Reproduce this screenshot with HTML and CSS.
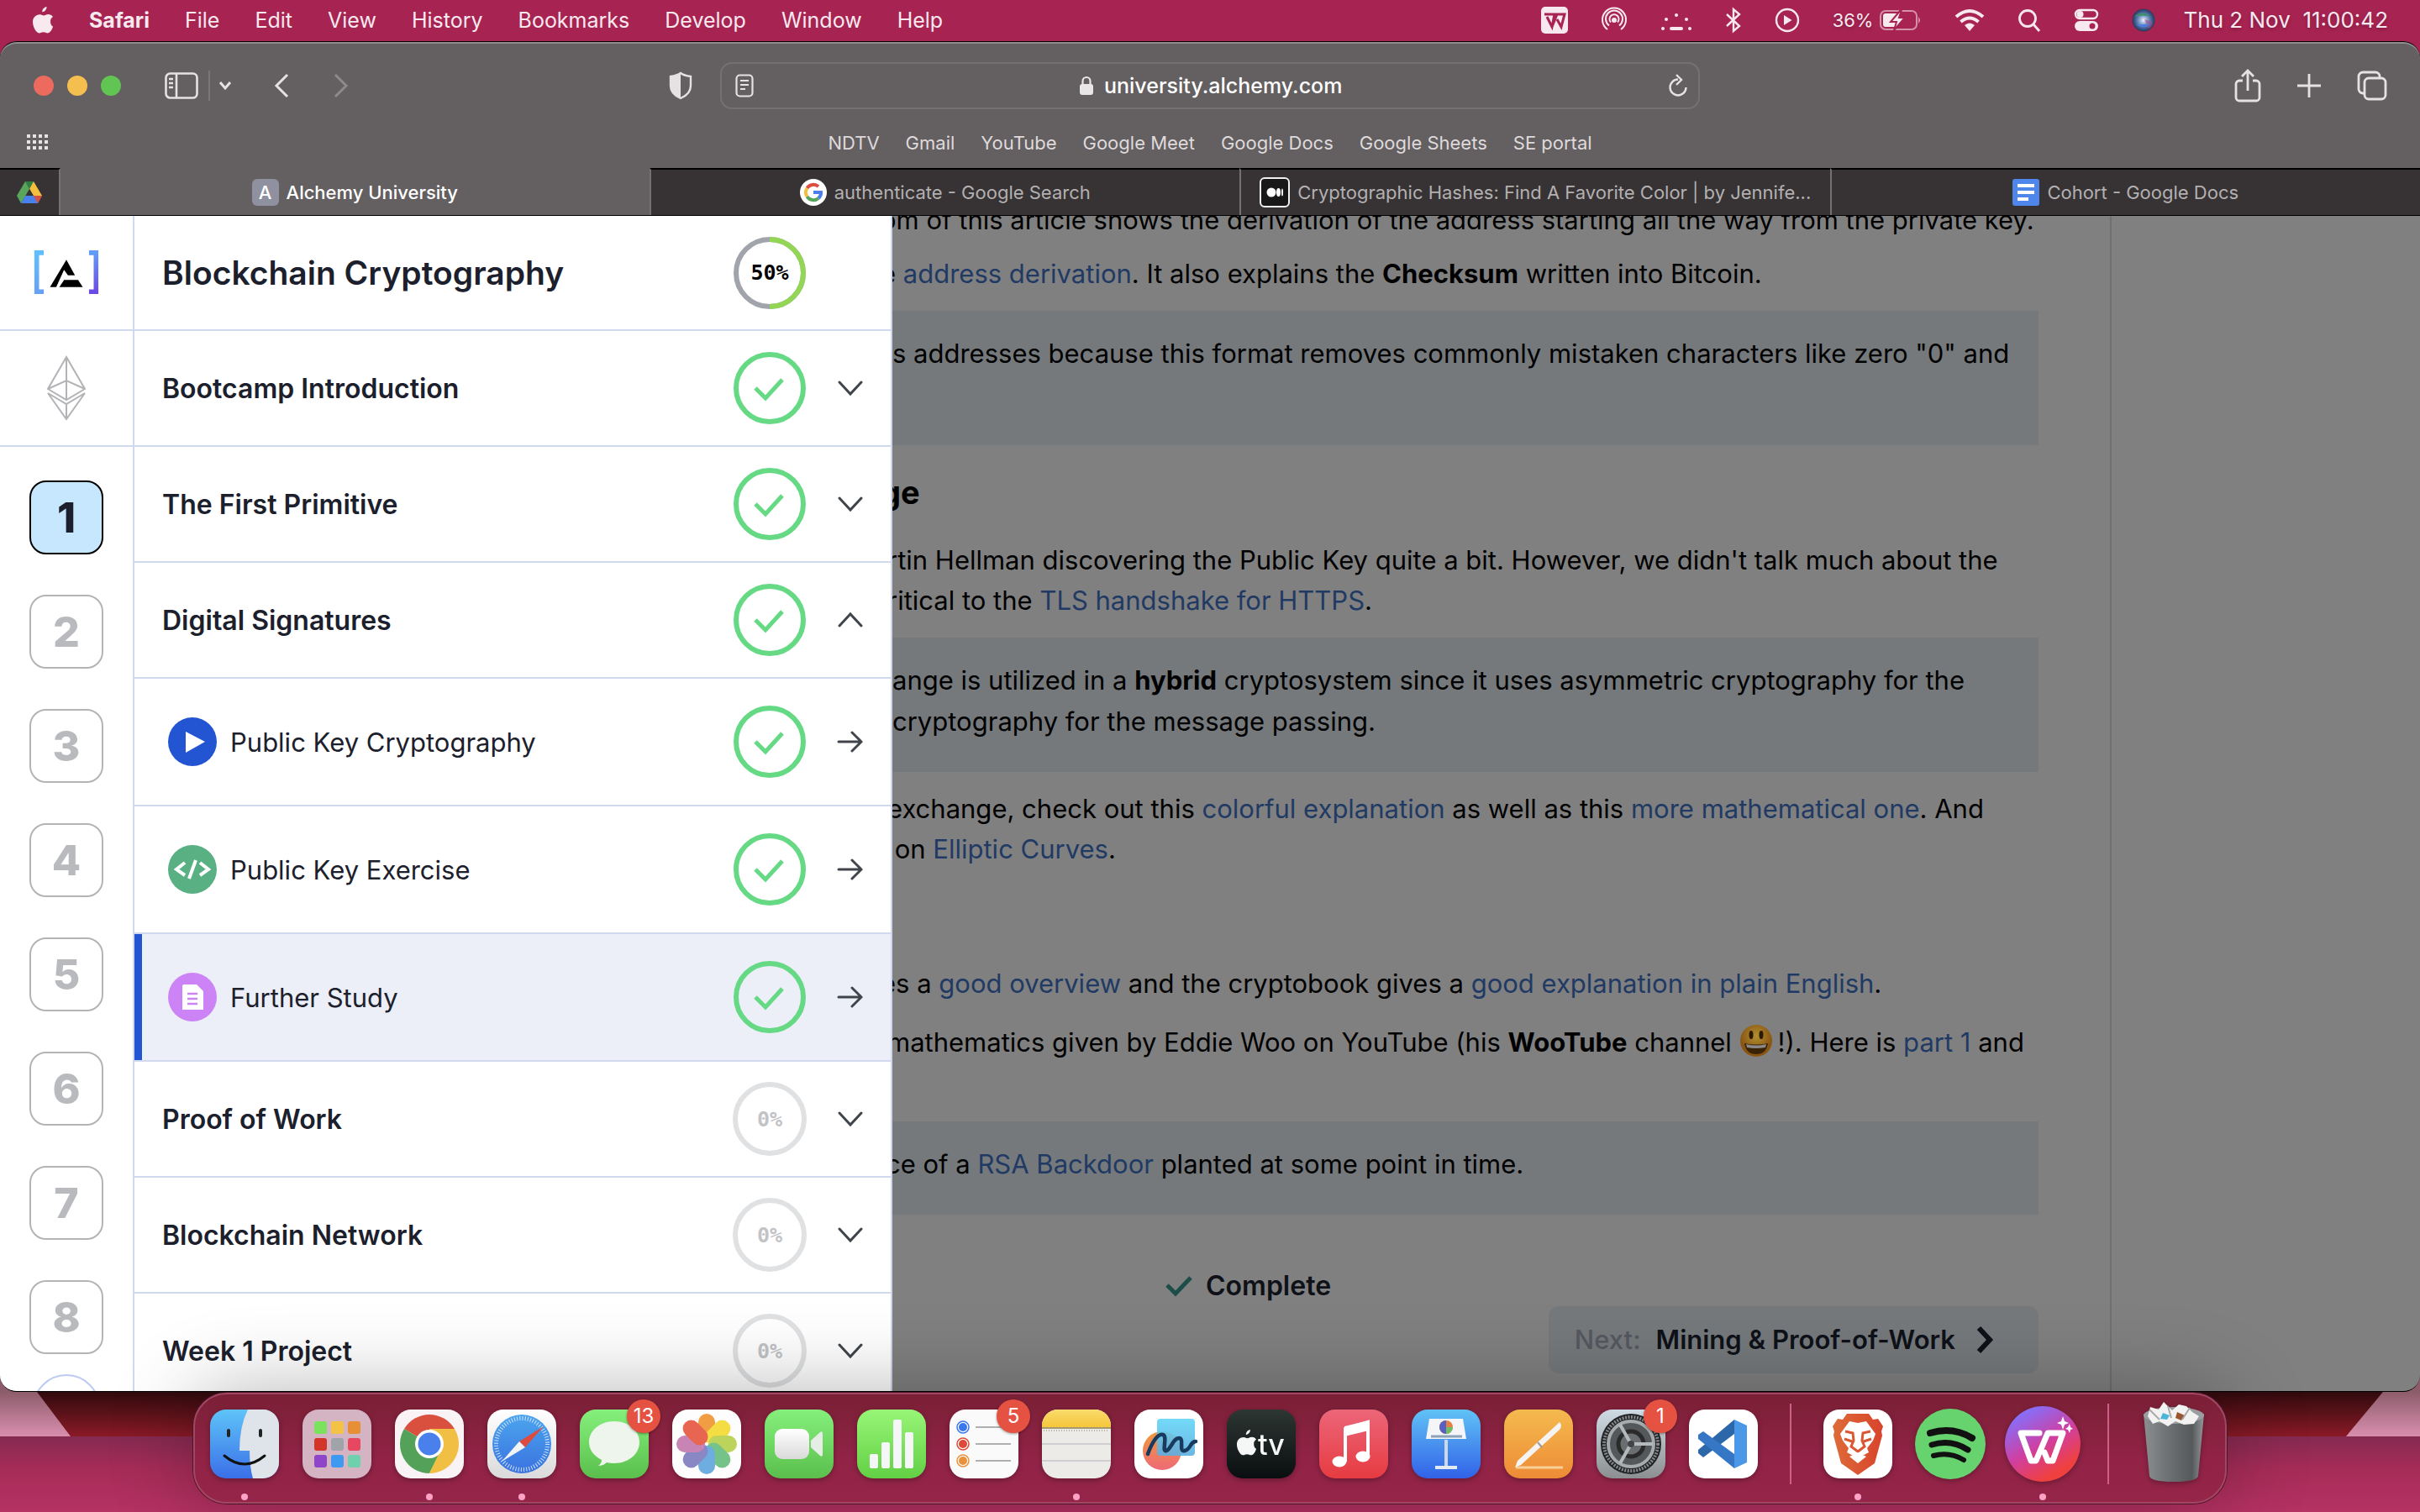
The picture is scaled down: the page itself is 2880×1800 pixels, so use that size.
FILE: index.html
```html
<!DOCTYPE html>
<html lang="en">
<head>
<meta charset="utf-8">
<title>Alchemy University</title>
<link rel="stylesheet" href="styles.css">
</head>
<body>
<svg class="defs" aria-hidden="true">
  <defs>
    <linearGradient id="gFinder" x2="0" y2="1"><stop offset="0" stop-color="#5ec4f8"/><stop offset="1" stop-color="#3a6fe8"/></linearGradient>
    <linearGradient id="gGreen" x2="0" y2="1"><stop offset="0" stop-color="#86f07c"/><stop offset="1" stop-color="#5abf4c"/></linearGradient>
    <linearGradient id="gLime" x2="0" y2="1"><stop offset="0" stop-color="#98f577"/><stop offset="1" stop-color="#62d044"/></linearGradient>
    <linearGradient id="gWhite" x2="0" y2="1"><stop offset="0" stop-color="#fff"/><stop offset="1" stop-color="#d9dad9"/></linearGradient>
    <linearGradient id="gSafari" x2="0" y2="1"><stop offset="0" stop-color="#4ba5ee"/><stop offset="1" stop-color="#3a72e0"/></linearGradient>
    <linearGradient id="gYellow" x2="0" y2="1"><stop offset="0" stop-color="#fadb6b"/><stop offset="1" stop-color="#f4c53a"/></linearGradient>
    <linearGradient id="gTv" x2="0" y2="1"><stop offset="0" stop-color="#2d3633"/><stop offset="1" stop-color="#0a0e10"/></linearGradient>
    <linearGradient id="gMusic" x2="0" y2="1"><stop offset="0" stop-color="#ec6679"/><stop offset="1" stop-color="#e63b41"/></linearGradient>
    <linearGradient id="gKey" x2="0" y2="1"><stop offset="0" stop-color="#60c2f6"/><stop offset="1" stop-color="#3162e8"/></linearGradient>
    <linearGradient id="gPages" x2="0" y2="1"><stop offset="0" stop-color="#f4ba4e"/><stop offset="1" stop-color="#ee8b36"/></linearGradient>
    <linearGradient id="gSet" x2="0" y2="1"><stop offset="0" stop-color="#cfdce5"/><stop offset="1" stop-color="#8c8f90"/></linearGradient>
    <linearGradient id="gBrave"><stop offset="0" stop-color="#de6b38"/><stop offset="1" stop-color="#d8442c"/></linearGradient>
    <linearGradient id="gWps" x1=".2" x2=".8" y2="1"><stop offset=".1" stop-color="#8a6cf5"/><stop offset=".5" stop-color="#d03fa0"/><stop offset=".85" stop-color="#ef4040"/></linearGradient>
    <linearGradient id="gTrash"><stop offset="0" stop-color="#8c8f90"/><stop offset=".4" stop-color="#6d7173"/><stop offset=".8" stop-color="#56595b"/><stop offset="1" stop-color="#94989a"/></linearGradient>
    <linearGradient id="gFree" x2="0" y2="1"><stop offset="0" stop-color="#f09a3c"/><stop offset="1" stop-color="#ee6a78"/></linearGradient>
    <linearGradient id="gFree2" x2="0" y2="1"><stop offset="0" stop-color="#63d6f8"/><stop offset="1" stop-color="#5caee0"/></linearGradient>
    <linearGradient id="gLeft" gradientUnits="userSpaceOnUse" x1="0" y1="2" x2="0" y2="54"><stop offset="0" stop-color="#5fc0ff"/><stop offset="1" stop-color="#66a0f8"/></linearGradient>
    <linearGradient id="gRight" gradientUnits="userSpaceOnUse" x1="0" y1="2" x2="0" y2="54"><stop offset="0" stop-color="#639cf8"/><stop offset="1" stop-color="#6a4ae6"/></linearGradient>
    <radialGradient id="gSiri"><stop offset="0" stop-color="#f4f2ff"/><stop offset=".35" stop-color="#8aa6cf"/><stop offset=".75" stop-color="#3d5a92"/><stop offset="1" stop-color="#2b3a55"/></radialGradient>
    <radialGradient id="gSmile" cy=".35"><stop offset="0" stop-color="#b09030"/><stop offset="1" stop-color="#8a5512"/></radialGradient>
    <symbol id="apple" viewBox="0 0 26 32"><path d="M17.500 0c.3 3-2.300 6.200-5.200 6.200C12 3.400 14.500.4 17.500 0zM22 17.200c0-3 2-4.600 3-5.200-1.500-2.200-3.800-2.900-5.300-2.900-2.500-.1-4.400 1.400-5.500 1.400s-2.900-1.400-4.800-1.300C5 9.300.8 12.400 1 18.500 1.200 24 5 31.200 8.600 31.400c1.900 0 2.800-1.200 5.100-1.200s3 1.200 5 1.200c3.400-.1 5.600-5 6.300-7.800-1.800-.8-3-3.200-3-6.400z" fill="currentColor"/></symbol>
    <symbol id="down" viewBox="0 0 32 32"><path d="M3 9l13 14L29 9" fill="none" stroke="#40444b" stroke-width="3" stroke-linecap="round"/></symbol>
    <symbol id="up" viewBox="0 0 32 32"><path d="M3 23L16 9l13 14" fill="none" stroke="#40444b" stroke-width="3" stroke-linecap="round"/></symbol>
    <symbol id="arrow" viewBox="0 0 32 32"><path d="M2 16h27M18 5l11 11-11 11" fill="none" stroke="#40444b" stroke-width="3" stroke-linecap="round"/></symbol>
    <symbol id="done" viewBox="0 0 88 88"><circle cx="44" cy="44" r="40" fill="none" stroke="#66d985" stroke-width="6"/><path d="M27 44l12 12 20-22" fill="none" stroke="#66d985" stroke-width="5"/></symbol>
  </defs>
</svg>

<header class="menubar">
  <nav class="menus" aria-label="Menu bar">
    <button aria-label="Apple menu"><svg width="26" height="32"><use href="#apple"/></svg></button>
    <button class="strong">Safari</button><button>File</button><button>Edit</button><button>View</button><button>History</button><button>Bookmarks</button><button>Develop</button><button>Window</button><button>Help</button>
  </nav>
  <div class="status">
    <svg width="32" height="32" viewBox="0 0 32 32"><rect width="32" height="32" rx="5" fill="#f6e8ee"/><path d="M4 9h12l-3 15-6-12M13 24l6-15h9l-4 15-5-9" fill="none" stroke="#a72352" stroke-width="3"/></svg>
    <svg width="32" height="32" viewBox="0 0 32 32" fill="none" stroke="currentColor" stroke-width="2"><path d="M8 27a14 14 0 1 1 16 0M10 22.500a10 10 0 1 1 12 0M12 18.500a5.500 5.500 0 1 1 8 0"/><circle cx="16" cy="16" r="2" fill="currentColor"/></svg>
    <svg width="38" height="32" viewBox="0 0 38 32" fill="currentColor"><circle cx="19" cy="10" r="2"/><circle cx="7" cy="15" r="2"/><circle cx="31" cy="15" r="2"/><circle cx="3" cy="26" r="2"/><circle cx="35" cy="26" r="2"/><rect x="11" y="24" width="16" height="4" rx="2"/></svg>
    <svg width="20" height="32" viewBox="0 0 20 32" fill="none" stroke="currentColor" stroke-width="2.400"><path d="M2 9l15 14-7 6V3l7 6L2 23"/></svg>
    <svg width="30" height="32" viewBox="0 0 30 32"><circle cx="15" cy="16" r="13" fill="none" stroke="currentColor" stroke-width="2.400"/><path d="M11 10l9.500 6L11 22z" fill="currentColor"/></svg>
    <div class="battery"><span>36%</span><svg width="50" height="32" viewBox="0 0 50 32"><rect x="1" y="5" width="43" height="22" rx="6" fill="none" stroke="#d391aa" stroke-width="2"/><path d="M46 12q4 4 0 8z" fill="#d391aa"/><rect x="4" y="8" width="18" height="16" rx="3" fill="currentColor"/><path d="M25 4L13 18h7l-3 10 13-15h-7l3-9z" fill="currentColor" stroke="#a72352" stroke-width="2"/></svg></div>
    <svg width="36" height="32" viewBox="0 0 36 32" fill="none" stroke="currentColor" stroke-width="4"><path d="M2 12q16-14 32 0M7.500 18q10.500-9 21 0"/><path d="M12 22q6-5 12 0l-6 7z" fill="currentColor" stroke="none"/></svg>
    <svg width="28" height="32" viewBox="0 0 28 32" fill="none" stroke="currentColor" stroke-width="2.800"><circle cx="12" cy="14" r="9.500"/><path d="M19 21l7 8"/></svg>
    <svg width="30" height="32" viewBox="0 0 30 32"><rect x="2" y="4" width="26" height="10" rx="5" fill="none" stroke="currentColor" stroke-width="2.400"/><circle cx="7.500" cy="9" r="4" fill="currentColor"/><rect x="1" y="17" width="28" height="12" rx="6" fill="currentColor"/><circle cx="22" cy="23" r="3.500" fill="#a72352"/></svg>
    <svg width="28" height="32" viewBox="0 0 28 32"><circle cx="14" cy="16" r="13.500" fill="url(#gSiri)"/><path d="M3 12q8-9 20 0-9-3-20 0z" fill="#3b8f6e"/><path d="M15 15l10 3q-1 6-5 8z" fill="#a0508c" opacity=".6"/><path d="M5 21q9 7 18-1-8 2-18 1z" fill="#4a7fe0"/></svg>
    <time>Thu 2 Nov&nbsp; 11:00:42</time>
  </div>
</header>

<main class="window">
  <header class="toolbar">
    <div class="tools-left">
      <span class="lights"><i class="red"></i><i class="amber"></i><i class="green"></i></span>
      <button class="side" aria-label="Sidebar"><svg width="40" height="32" viewBox="0 0 40 32" fill="none" stroke="currentColor" stroke-width="2.600"><rect x="1.500" y="1.500" width="37" height="29" rx="5"/><path d="M14 2v28M5 8h5M5 13h5M5 18h5" /></svg></button>
      <span class="rule"></span>
      <button class="caret" aria-label="Tab groups"><svg width="16" height="12" viewBox="0 0 16 12" fill="none" stroke="currentColor" stroke-width="3"><path d="M2 2l6 7 6-7"/></svg></button>
      <button class="back" aria-label="Back"><svg width="18" height="30" viewBox="0 0 18 30" fill="none" stroke="currentColor" stroke-width="3"><path d="M16 2L3 15l13 13"/></svg></button>
      <button class="fwd" aria-label="Forward"><svg width="18" height="30" viewBox="0 0 18 30" fill="none" stroke="#8e898b" stroke-width="3"><path d="M2 2l13 13L2 28"/></svg></button>
      <button class="shield" aria-label="Privacy report"><svg width="30" height="34" viewBox="0 0 30 34"><path d="M15 2c4 3 8 3.500 12 4v11c0 7-5 12-12 15C8 29 3 24 3 17V6c4-.5 8-1 12-4z" fill="none" stroke="currentColor" stroke-width="2.400"/><path d="M15 2v30C8 29 3 24 3 17V6c4-.5 8-1 12-4z" fill="currentColor"/></svg></button>
    </div>
    <div class="address">
      <button aria-label="Reader"><svg width="22" height="28" viewBox="0 0 22 28" fill="none" stroke="currentColor" stroke-width="2.200"><rect x="1.500" y="1.500" width="19" height="25" rx="4"/><path d="M6 8h10M6 13h10M6 18h6"/></svg></button>
      <label class="url"><svg width="18" height="24" viewBox="0 0 18 24"><rect x="1" y="10" width="16" height="13" rx="3" fill="currentColor"/><path d="M4.500 11V6.500a4.500 4.500 0 0 1 9 0V11" fill="none" stroke="currentColor" stroke-width="2.200"/></svg><input type="text" aria-label="Address" value="university.alchemy.com"></label>
      <button aria-label="Reload"><svg width="24" height="28" viewBox="0 0 24 28" fill="none" stroke="currentColor" stroke-width="2.400"><path d="M12 6.500a9.500 9.500 0 1 0 9.500 9.500M10 1l6 6-6 6"/></svg></button>
    </div>
    <div class="tools-right">
      <button aria-label="Share"><svg width="32" height="40" viewBox="0 0 32 40" fill="none" stroke="currentColor" stroke-width="2.800"><path d="M10 14H6a4 4 0 0 0-4 4v16a4 4 0 0 0 4 4h20a4 4 0 0 0 4-4V18a4 4 0 0 0-4-4h-4M16 26V3M9 9l7-7 7 7"/></svg></button>
      <button aria-label="New tab"><svg width="28" height="28" viewBox="0 0 28 28" stroke="currentColor" stroke-width="2.800"><path d="M14 0v28M0 14h28"/></svg></button>
      <button aria-label="Tab overview"><svg width="36" height="36" viewBox="0 0 36 36" fill="none" stroke="currentColor" stroke-width="2.800"><rect x="9" y="9" width="25" height="25" rx="5"/><path d="M9 27H7a5 5 0 0 1-5-5V7a5 5 0 0 1 5-5h15a5 5 0 0 1 5 5v2"/></svg></button>
    </div>
  </header>
  <nav class="bookmarks" aria-label="Favourites">
    <button class="grid" aria-label="Show start page"><svg width="26" height="20" viewBox="0 0 26 20" fill="currentColor"><path d="M0 0h4v4H0zM7 0h4v4H7zM14 0h4v4h-4zM21 0h4v4h-4zM0 7h4v4H0zM7 7h4v4H7zM14 7h4v4h-4zM21 7h4v4h-4zM0 14h4v4H0zM7 14h4v4H7zM14 14h4v4h-4zM21 14h4v4h-4z"/></svg></button>
    <div class="links"><a href="#">NDTV</a><a href="#">Gmail</a><a href="#">YouTube</a><a href="#">Google Meet</a><a href="#">Google Docs</a><a href="#">Google Sheets</a><a href="#">SE portal</a></div>
  </nav>
  <nav class="tabs" aria-label="Tabs">
    <button class="pinned" aria-label="Google Drive"><svg width="30" height="26" viewBox="0 0 30 26"><path d="M10 0h10l10 17H20z" fill="#f4bf3f"/><path d="M10 0L0 17l5 9L15 9z" fill="#5aa55c"/><path d="M10 0h10l-5 9z" fill="#2f7f45"/><path d="M10 17h20l-5 9H5z" fill="#4a80ea"/><path d="M20 17h10l-5 9z" fill="#d9503f"/></svg></button>
    <button class="tab active"><span class="fav-a">A</span><span>Alchemy University</span></button>
    <button class="tab"><svg width="32" height="32" viewBox="0 0 32 32"><circle cx="16" cy="16" r="16" fill="#fff"/><g fill="none" stroke-width="4"><path d="M22 9a9 9 0 0 0-13.500 2" stroke="#dc4e41"/><path d="M8.500 11a9 9 0 0 0 0 10" stroke="#f4bf3f"/><path d="M8.500 21a9 9 0 0 0 13.500 2" stroke="#57a55a"/><path d="M22 23q3.500-3 3-7h-9" stroke="#4b80ec"/></g></svg><span>authenticate - Google Search</span></button>
    <button class="tab"><svg width="36" height="36" viewBox="0 0 36 36"><rect x="1" y="1" width="34" height="34" rx="5" fill="#181818" stroke="#f1f1f1" stroke-width="2"/><circle cx="14" cy="18" r="5.500" fill="#fff"/><ellipse cx="22.500" cy="18" rx="2.500" ry="5" fill="#fff"/><ellipse cx="27" cy="18" rx="1" ry="4.500" fill="#fff"/></svg><span>Cryptographic Hashes: Find A Favorite Color | by Jennife...</span></button>
    <button class="tab"><svg width="32" height="32" viewBox="0 0 32 32"><rect width="32" height="32" rx="3" fill="#4f86ec"/><path d="M6 6h20v4H6zM6 14h20v4H6zM6 22h13v4H6z" fill="#fff"/></svg><span>Cohort - Google Docs</span></button>
  </nav>

  <div class="page">
    <nav class="rail" aria-label="Weeks">
      <a class="rail-cell first" href="#" aria-label="Alchemy University home"><svg width="78" height="58" viewBox="0 0 84 58"><path d="M13 3H4v50h9" fill="none" stroke="url(#gLeft)" stroke-width="6"/><path d="M71 3h9v50h-9" fill="none" stroke="url(#gRight)" stroke-width="6"/><path d="M42 12l11 20h-9l-5-7-10 22h-8z"/><path d="M39 38h18l6 9H33z"/></svg></a>
      <a class="rail-cell" href="#" aria-label="Ethereum"><svg width="48" height="78" viewBox="0 0 48 78" fill="none" stroke="#b2b3b6" stroke-width="2"><path d="M24 2L2 40l22 13 22-13zM24 2v51M2 40l22-10 22 10M2 45l22 31 22-31-22 13zM24 58v18"/></svg></a>
      <div class="weeks"><button class="current">1</button><button>2</button><button>3</button><button>4</button><button>5</button><button>6</button><button>7</button><button>8</button><span class="more"></span></div>
    </nav>
    <aside class="drawer">
      <div class="row head"><h1>Blockchain Cryptography</h1><span class="ring"><svg width="88" height="88" viewBox="0 0 88 88" fill="none" stroke-width="6"><circle cx="44" cy="44" r="40" stroke="#a2a4ac"/><path d="M44 4a40 40 0 0 1 0 80" stroke="#93d655"/></svg><b>50%</b></span></div>
      <button class="row"><span>Bootcamp Introduction</span><svg class="tick"><use href="#done"/></svg><svg class="go"><use href="#down"/></svg></button>
      <button class="row"><span>The First Primitive</span><svg class="tick"><use href="#done"/></svg><svg class="go"><use href="#down"/></svg></button>
      <button class="row"><span>Digital Signatures</span><svg class="tick"><use href="#done"/></svg><svg class="go"><use href="#up"/></svg></button>
      <a class="row lesson" href="#"><svg width="58" height="58" viewBox="0 0 58 58"><circle cx="29" cy="29" r="29" fill="#2355d3"/><path d="M21 17l23 12-23 13z" fill="#fff"/></svg><span>Public Key Cryptography</span><svg class="tick"><use href="#done"/></svg><svg class="go"><use href="#arrow"/></svg></a>
      <a class="row lesson" href="#"><svg width="58" height="58" viewBox="0 0 58 58" fill="none" stroke="#fff" stroke-width="4"><circle cx="29" cy="29" r="29" fill="#58b083" stroke="none"/><path d="M20 21L10 29l10 7M38 21l10 8-10 7M33 18l-8 22"/></svg><span>Public Key Exercise</span><svg class="tick"><use href="#done"/></svg><svg class="go"><use href="#arrow"/></svg></a>
      <a class="row lesson selected" href="#"><svg width="58" height="58" viewBox="0 0 58 58"><circle cx="29" cy="29" r="29" fill="#cb83f5"/><path d="M19 14h15l8 8v22H17V16q0-2 2-2z" fill="#fff"/><path d="M23 25h12M23 31h12M23 37h12" stroke="#cb83f5" stroke-width="2.500"/></svg><span>Further Study</span><svg class="tick"><use href="#done"/></svg><svg class="go"><use href="#arrow"/></svg></a>
      <button class="row"><span>Proof of Work</span><span class="ring empty"><b>0%</b></span><svg class="go"><use href="#down"/></svg></button>
      <button class="row"><span>Blockchain Network</span><span class="ring empty"><b>0%</b></span><svg class="go"><use href="#down"/></svg></button>
      <button class="row"><span>Week 1 Project</span><span class="ring empty"><b>0%</b></span><svg class="go"><use href="#down"/></svg></button>
    </aside>
    <article class="article">
      <div class="copy">
        <p class="close tucked">om of this article shows the derivation of the address starting all the way from the private key.</p>
        <p class="tucked">e <a href="#">address derivation</a>. It also explains the <strong>Checksum</strong> written into Bitcoin.</p>
        <blockquote class="tall">s addresses because this format removes commonly mistaken characters like zero "0" and</blockquote>
        <h2 class="tucked">ge</h2>
        <p>rtin Hellman discovering the Public Key quite a bit. However, we didn't talk much about the<br>ritical to the <a href="#">TLS handshake for HTTPS</a>.</p>
        <blockquote class="tall">ange is utilized in a <strong>hybrid</strong> cryptosystem since it uses asymmetric cryptography for the<br>cryptography for the message passing.</blockquote>
        <p class="section-end">exchange, check out this <a href="#">colorful explanation</a> as well as this <a href="#">more mathematical one</a>. And<br>&nbsp;on <a href="#">Elliptic Curves</a>.</p>
        <p class="loose tucked">es a <a href="#">good overview</a> and the cryptobook gives a <a href="#">good explanation in plain English</a>.</p>
        <p class="loose two-lines">mathematics given by Eddie Woo on YouTube (his <strong>WooTube</strong> channel <svg class="smile" viewBox="0 0 40 40" role="img" aria-label="smiling face"><circle cx="20" cy="20" r="19" fill="url(#gSmile)"/><ellipse cx="14" cy="13" rx="2.500" ry="5" fill="#2c1a05"/><ellipse cx="26" cy="13" rx="2.500" ry="5" fill="#2c1a05"/><path d="M6 23q14 3 28 0-2 13-14 13T6 23z" fill="#3a2207"/><path d="M8 24q12 3 24 0l-1 4q-11 2-22 0z" fill="#8a8a88"/></svg>!). Here is <a href="#">part 1</a> and</p>
        <blockquote class="tucked">ce of a <a href="#">RSA Backdoor</a> planted at some point in time.</blockquote>
        <div class="complete"><svg width="34" height="28" viewBox="0 0 34 28"><path d="M3 13l10 10L31 4" fill="none" stroke="#1d4d48" stroke-width="5"/></svg>Complete</div>
        <button class="next"><span>Next:</span> Mining &amp; Proof-of-Work<svg width="24" height="34" viewBox="0 0 24 34"><path d="M4 3l13 14L4 31" fill="none" stroke="#0e1118" stroke-width="6"/></svg></button>
      </div>
      <div class="margin"></div>
    </article>
  </div>
</main>

<footer class="desktop">
  <nav class="dock" aria-label="Dock">
    <button class="app running" aria-label="Finder"><svg viewBox="0 0 82 82"><rect width="82" height="82" rx="19" fill="url(#gFinder)"/><path d="M45 0h18a19 19 0 0 1 19 19v44a19 19 0 0 1-19 19H51q-4-14-4-33H35Q35 20 45 0z" fill="#dfe4ea"/><path d="M22 25v6M60 25v6" stroke="#222" stroke-width="4" stroke-linecap="round"/><path d="M17 55q24 20 48 0" fill="none" stroke="#111" stroke-width="3" stroke-linecap="round"/></svg></button>
    <button class="app" aria-label="Launchpad"><svg viewBox="0 0 82 82"><rect width="82" height="82" rx="19" fill="#d4b4c2"/><rect x="14" y="14" width="15" height="15" rx="3" fill="#7be25e"/><rect x="34" y="14" width="15" height="15" rx="3" fill="#f4c244"/><rect x="54" y="14" width="15" height="15" rx="3" fill="#e88f35"/><rect x="14" y="34" width="15" height="15" rx="3" fill="#d2362b"/><rect x="34" y="34" width="15" height="15" rx="3" fill="#a0a4a8"/><rect x="54" y="34" width="15" height="15" rx="3" fill="#e8485f"/><rect x="14" y="54" width="15" height="15" rx="3" fill="#8f45c9"/><rect x="34" y="54" width="15" height="15" rx="3" fill="#3d9af0"/><rect x="54" y="54" width="15" height="15" rx="3" fill="#6ed0ac"/></svg></button>
    <button class="app running" aria-label="Chrome"><svg viewBox="0 0 82 82"><rect width="82" height="82" rx="19" fill="#faf3f5"/><path d="M41 41L11 23a35 35 0 0 1 60 0z" fill="#d9503f"/><path d="M41 41h0L11 23a35 35 0 0 0 30 53l14-27z" fill="#54a25a"/><path d="M71 23H41v18l13 8-13 27a35 35 0 0 0 30-53z" fill="#f2bf45"/><circle cx="41" cy="41" r="17" fill="#fff"/><circle cx="41" cy="41" r="13.500" fill="#4a80ec"/></svg></button>
    <button class="app running" aria-label="Safari"><svg viewBox="0 0 82 82"><rect width="82" height="82" rx="19" fill="url(#gWhite)"/><circle cx="41" cy="41" r="35" fill="url(#gSafari)"/><circle cx="41" cy="41" r="30.500" fill="none" stroke="#cfe4fa" stroke-width="5" stroke-dasharray="1 2.200"/><path d="M67 20L45 45l-7-7z" fill="#dc4b3e"/><path d="M17 62l21-24 7 7z" fill="#f1f3f5"/></svg></button>
    <button class="app" aria-label="Messages"><svg viewBox="0 0 82 82"><rect width="82" height="82" rx="19" fill="url(#gGreen)"/><path d="M41 14c17 0 30 11 30 25S58 64 41 64q-5 0-9-1-4 4-10 4 4-3 4-7-15-8-15-21c0-14 13-25 30-25z" fill="#eef5ec"/></svg><b class="badge">13</b></button>
    <button class="app" aria-label="Photos"><svg viewBox="0 0 82 82"><rect width="82" height="82" rx="19" fill="#fdfdfd"/><g opacity=".9"><rect x="31" y="5" width="20" height="34" rx="10" fill="#f0932f"/><rect x="31" y="5" width="20" height="34" rx="10" fill="#f2da2f" transform="rotate(45 41 41)"/><rect x="31" y="5" width="20" height="34" rx="10" fill="#b7d04b" transform="rotate(90 41 41)"/><rect x="31" y="5" width="20" height="34" rx="10" fill="#67bd7d" transform="rotate(135 41 41)"/><rect x="31" y="5" width="20" height="34" rx="10" fill="#5fa5dd" transform="rotate(180 41 41)"/><rect x="31" y="5" width="20" height="34" rx="10" fill="#7d7cc0" transform="rotate(225 41 41)"/><rect x="31" y="5" width="20" height="34" rx="10" fill="#c277ad" transform="rotate(270 41 41)"/><rect x="31" y="5" width="20" height="34" rx="10" fill="#e6553f" transform="rotate(315 41 41)"/></g></svg></button>
    <button class="app" aria-label="FaceTime"><svg viewBox="0 0 82 82"><rect width="82" height="82" rx="19" fill="url(#gGreen)"/><rect x="12" y="23" width="41" height="36" rx="9" fill="url(#gWhite)"/><path d="M55 37l11-10q3-2 3 2v24q0 4-3 2L55 45z" fill="#e6ece6"/></svg></button>
    <button class="app" aria-label="Numbers"><svg viewBox="0 0 82 82"><rect width="82" height="82" rx="19" fill="url(#gLime)"/><g fill="#f4f6f7"><rect x="15" y="53" width="10" height="17" rx="2"/><rect x="29" y="39" width="10" height="31" rx="2"/><rect x="43" y="12" width="10" height="58" rx="2"/><rect x="57" y="27" width="10" height="43" rx="2"/></g></svg></button>
    <button class="app" aria-label="Reminders"><svg viewBox="0 0 82 82"><rect width="82" height="82" rx="19" fill="#fafafa"/><g fill="#3a77ee"><circle cx="16" cy="21" r="5"/><circle cx="16" cy="41" r="5" fill="#dd4a3a"/><circle cx="16" cy="61" r="5" fill="#e8933b"/></g><g fill="none" stroke-width="1.500"><circle cx="16" cy="21" r="7" stroke="#3a77ee"/><circle cx="16" cy="41" r="7" stroke="#dd4a3a"/><circle cx="16" cy="61" r="7" stroke="#e8933b"/></g><path d="M31 21h42M31 41h42M31 61h42" stroke="#aeb0b2" stroke-width="2"/></svg><b class="badge">5</b></button>
    <button class="app running" aria-label="Notes"><svg viewBox="0 0 82 82"><rect width="82" height="82" rx="19" fill="#ecebe8"/><path d="M0 22v-3A19 19 0 0 1 19 0h44a19 19 0 0 1 19 19v3z" fill="url(#gYellow)"/><path d="M0 22h82" stroke="#a89a70" stroke-width="2"/><path d="M2 25h78" stroke="#b5b3ae" stroke-width="2" stroke-dasharray="1 2"/><path d="M0 41h82M0 61h82" stroke="#cfced0" stroke-width="2"/></svg></button>
    <button class="app" aria-label="Freeform"><svg viewBox="0 0 82 82"><rect width="82" height="82" rx="19" fill="#fff"/><circle cx="33" cy="49" r="23" fill="url(#gFree)"/><rect x="27" y="11" width="45" height="44" rx="4" fill="url(#gFree2)" opacity=".9"/><path d="M16 53c5-14 12-25 18-23s-2 21 4 19 8-15 15-15-1 17 7 15 6-11 13-11" fill="none" stroke="#173a5e" stroke-width="4.500" stroke-linecap="round"/></svg></button>
    <button class="app" aria-label="TV"><svg viewBox="0 0 82 82"><rect width="82" height="82" rx="19" fill="url(#gTv)"/><svg x="11" y="24" width="25" height="31" color="#f5f6f6"><use href="#apple"/></svg><text x="37" y="54" class="tv">tv</text></svg></button>
    <button class="app" aria-label="Music"><svg viewBox="0 0 82 82"><rect width="82" height="82" rx="19" fill="url(#gMusic)"/><path d="M31 62V23l27-8v41" fill="none" stroke="#fff" stroke-width="4"/><path d="M30 20l29-7v12l-29 7z" fill="#fff"/><ellipse cx="24" cy="62" rx="8.500" ry="6.500" fill="#fff"/><ellipse cx="52" cy="56" rx="8.500" ry="6.500" fill="#fff"/></svg></button>
    <button class="app" aria-label="Keynote"><svg viewBox="0 0 82 82"><rect width="82" height="82" rx="19" fill="url(#gKey)"/><path d="M21 11h40l4 24H17z" fill="#f3f5f8"/><path d="M23 32h37" stroke="#8ea2b8" stroke-width="3"/><circle cx="41" cy="21" r="8" fill="#e67f43"/><path d="M41 21v8a8 8 0 0 1 0-16z" fill="#5a60c0"/><path d="M41 21h8a8 8 0 0 1-8 8z" fill="#6cbd65"/><path d="M41 36v32" stroke="#cdd8e6" stroke-width="4"/><rect x="28" y="67" width="26" height="4" fill="#e3eaf2"/></svg></button>
    <button class="app" aria-label="Pages"><svg viewBox="0 0 82 82"><rect width="82" height="82" rx="19" fill="url(#gPages)"/><path d="M14 69h56" stroke="#f9cf98" stroke-width="3"/><path d="M66 15q4 4 0 9L20 66l-7 3 3-8z" fill="#f6f4f2"/><path d="M40 39l5 6" stroke="#999" stroke-width="2"/></svg></button>
    <button class="app" aria-label="System Settings"><svg viewBox="0 0 82 82"><rect width="82" height="82" rx="19" fill="url(#gSet)"/><circle cx="41" cy="41" r="36" fill="#202224"/><circle cx="41" cy="41" r="32" fill="none" stroke="#85898c" stroke-width="4" stroke-dasharray="2 1.500"/><circle cx="41" cy="41" r="27" fill="#55585a" stroke="#a6abae" stroke-width="4"/><circle cx="41" cy="41" r="15" fill="#6b6e70" stroke="#2b2b2b" stroke-width="5"/><path d="M41 41h26M41 41L28 18M41 41L28 64" stroke="#b4b9bc" stroke-width="4"/><circle cx="41" cy="41" r="4" fill="#444"/></svg><b class="badge">1</b></button>
    <button class="app" aria-label="Visual Studio Code"><svg viewBox="0 0 82 82"><rect width="82" height="82" rx="19" fill="#fff"/><path d="M54 12v17L17 57l-6-5V48z" fill="#2c67a9"/><path d="M54 70V53L17 26l-6 4v5z" fill="#3577c5"/><path d="M54 12l15 7v44l-15 7z" fill="#4c98e8"/></svg></button>
    <span class="divider"></span>
    <button class="app running" aria-label="Brave"><svg viewBox="0 0 82 82"><rect width="82" height="82" rx="19" fill="#fff"/><path d="M28 5h26l5 7 6-1 6 9-2 6 1 5-9 33-20 14-20-14-9-33 1-5-2-6 6-9 6 1z" fill="url(#gBrave)"/><path d="M41 16l10-2 11 15-3 8-7 9 2 5-13 7-13-7 2-5-7-9-3-8 11-15z" fill="#fff"/><path d="M26 26l9 2 1 9-3 7 8 6 8-6-3-7 1-9 9-2M25 35l9 3M57 35l-9 3" fill="none" stroke="#db5632" stroke-width="3"/><path d="M31 56l10-5 10 5-10 8z" fill="#fff"/></svg></button>
    <button class="app" aria-label="Spotify"><svg viewBox="0 0 82 82"><circle cx="41" cy="41" r="42" fill="#66d36e"/><g fill="none" stroke="#111" stroke-linecap="round"><path d="M17 28q27-8 50 6" stroke-width="8"/><path d="M19 42q23-7 43 6" stroke-width="7"/><path d="M21 55q19-5 36 5" stroke-width="6"/></g></svg></button>
    <button class="app running" aria-label="WPS Office"><svg viewBox="0 0 82 82"><circle cx="41" cy="41" r="45" fill="url(#gWps)"/><path d="M37 28H15l12 33h6l14-33h18L53 61h-6l-4-10" fill="none" stroke="#fff" stroke-width="7" stroke-linejoin="round" stroke-linecap="round"/><path d="M65 8l2 6 5 2-5 2-2 6-2-6-5-2 5-2zM73 17l1 4 3 2-3 1-1 4-2-4-3-1 3-2z" fill="#fff"/></svg></button>
    <span class="divider end"></span>
    <button class="app" aria-label="Bin"><svg viewBox="0 0 82 82"><path d="M5 5l72 0-7 74q-1 7-29 7t-29-7z" fill="url(#gTrash)"/><ellipse cx="41" cy="7" rx="36" ry="10" fill="#9b9ea0"/><path d="M10 8l3-11 10 3 6-9 10 10 8-7 9 2 7 7 8 5-6 9-12 1-10-4-9 6-10-6-8 3z" fill="#f2f2f2"/><path d="M28 4l8 3-3 5-8-1z" fill="#4db6d8"/><path d="M45 3l9 4-4 6-7-3z" fill="#9a5530"/><path d="M12 0l12 12M34-4l4 14M60-2l-9 14" stroke="#aaa" stroke-width="2"/></svg></button>
  </nav>
</footer>
</body>
</html>
```
FILE: styles.css
```css
* { box-sizing: border-box; }
body {
  margin: 0;
  height: 100vh;
  display: flex;
  flex-direction: column;
  overflow: hidden;
  background: linear-gradient(#a72352 50%, #8d5c6b 50%);
  font-family: Inter, "Liberation Sans", sans-serif;
  color: #1b202c;
}
.defs { position: absolute; width: 0; height: 0; }
button { font: inherit; color: inherit; background: none; border: 0; padding: 0; margin: 0; }
a { color: inherit; text-decoration: none; }
svg { display: block; flex: none; overflow: visible; }

/* menu bar */
.menubar {
  flex: none;
  height: 49px;
  padding: 0 38px 2px;
  display: flex;
  align-items: center;
  justify-content: space-between;
  background: #a72352;
  color: #f8e9ef;
  font-size: 25px;
  text-shadow: 0 2px 4px rgba(0, 0, 0, .25);
}
.menus { display: flex; align-items: center; gap: 42px; }
.strong { font-weight: 700; }
.status { display: flex; align-items: center; gap: 39px; }
.status time { font-size: 26px; margin-left: -6px; }
.battery { display: flex; align-items: center; gap: 8px; font-size: 22px; }

/* browser window */
.window {
  position: relative;
  z-index: 1;
  flex: 1;
  min-height: 0;
  display: flex;
  flex-direction: column;
  overflow: hidden;
  border: 1px solid #000;
  border-width: 1px 0;
  border-radius: 20px;
  background: #645f60;
  box-shadow: inset 0 2px #918c8d;
  color: #e6e2e4;
}
.toolbar {
  flex: none;
  height: 104px;
  display: grid;
  grid-template-columns: minmax(0, 1fr) 40.5% minmax(0, 1fr);
  align-items: center;
}
.tools-left { display: flex; align-items: center; padding: 0 32px 0 40px; }
.lights { display: flex; gap: 16px; }
.lights i { width: 24px; height: 24px; border-radius: 50%; }
.red { background: #ec6a5e; }
.amber { background: #f4bf4f; }
.green { background: #61c554; }
.side { margin-left: 52px; }
.rule { width: 2px; height: 36px; margin: 0 10px 0 12px; background: #7b7678; }
.back { margin-left: 50px; }
.fwd { margin-left: 53px; }
.shield { margin-left: auto; }
.address {
  height: 56px;
  display: flex;
  align-items: center;
  justify-content: space-between;
  padding: 0 12px 0 16px;
  border: 2px solid #757072;
  border-radius: 14px;
}
.url { display: flex; align-items: center; gap: 12px; color: #e9e6e7; }
.url input {
  width: 284px;
  padding: 0;
  border: 0;
  background: none;
  color: #fff;
  font: 500 25px/32px Inter, "Liberation Sans", sans-serif;
}
.tools-right { display: flex; align-items: center; justify-content: flex-end; gap: 43px; padding-right: 39px; }
.bookmarks { flex: none; height: 46px; display: grid; grid-template-columns: 1fr auto 1fr; align-items: start; }
.bookmarks .grid { height: 32px; padding-left: 32px; display: flex; align-items: center; }
.links { display: flex; gap: 31px; font-size: 22px; line-height: 32px; color: #dedadc; }
.tabs { flex: none; height: 57px; display: flex; border-bottom: 1px solid #000; font-size: 22px; color: #b3b0b1; }
.tabs button { display: flex; align-items: center; justify-content: center; gap: 9px; border-top: 2px solid #000; background: #373334; white-space: nowrap; }
.pinned { width: 72px; border-right: 2px solid #757172; }
.tab { flex: 1 1 0; min-width: 0; }
.tab + .tab { border-left: 2px solid #757172; }
.tabs .active { background: none; border-top-color: transparent; color: #fff; font-weight: 500; }
.fav-a { width: 32px; height: 32px; border-radius: 6px; background: #8f90a0; font-size: 22px; line-height: 32px; text-align: center; }

/* page */
.page { flex: 1; min-height: 0; display: flex; overflow: hidden; background: #808080; }
.rail { flex: none; width: 160px; background: #fff; border-right: 2px solid #d1d9ee; }
.rail-cell { height: 138px; display: flex; align-items: center; justify-content: center; border-bottom: 2px solid #d1d9ee; }
.rail .first { height: 137px; }
.weeks { display: flex; flex-direction: column; align-items: center; gap: 48px; padding-top: 40px; }
.weeks button {
  width: 88px;
  height: 88px;
  border: 2px solid #b3b4b6;
  border-radius: 20px;
  font-size: 50px;
  font-weight: 800;
  color: #b9babe;
}
.weeks .current { border-color: #000; background: #c6e7fd; color: #1b202c; }
.weeks .more { flex: none; width: 80px; height: 80px; margin-top: -24px; border: 2px solid #bccbf2; border-radius: 50%; }

.drawer { flex: none; width: 902px; background: #fff; border-right: 2px solid #cfd6e9; color: #1b202c; }
.row {
  width: 100%;
  height: 138px;
  display: flex;
  align-items: center;
  padding: 0 32px 0 33px;
  border-bottom: 2px solid #d1d9ee;
  font-size: 32px;
  font-weight: 600;
  text-align: left;
}
.row > span:not(.ring), .row h1 { flex: 1; }
.row h1 { margin: 0; font-size: 39px; font-weight: 600; }
.drawer .head { height: 137px; padding-right: 100px; }
.tick { width: 88px; height: 88px; }
.go { width: 32px; height: 32px; margin-left: 36px; }
.lesson { height: 152px; padding-left: 40px; font-size: 31px; font-weight: 400; }
.lesson span { margin-left: 16px; }
.selected { background: #eceef8; box-shadow: inset 9px 0 #2355d3; }
.ring { width: 88px; height: 88px; display: grid; place-items: center; color: #000; }
.ring > * { grid-area: 1 / 1; }
.ring b { font: 700 25px "DejaVu Sans Mono", monospace; }
.empty { border: 6px solid #e0e1e3; border-radius: 50%; color: #c2c3c6; }

.article { flex: 1; min-width: 0; display: flex; overflow: hidden; color: #000; font-size: 31px; line-height: 48px; }
.copy { flex: 1; min-width: 0; padding-right: 85px; margin: -19px 0 0 -6px; white-space: nowrap; display: flex; flex-direction: column; }
.margin { flex: none; width: 369px; border-left: 2px solid #6f7072; }
.article p { margin: 0 0 20px; }
.article a { color: #203a64; }
.article blockquote { margin: 0 0 20px; padding: 26px 6px 36px; background: #75797c; line-height: 49px; }
.article .tall { min-height: 160px; }
.article h2 { margin: 12px 0 33px; font-size: 38px; line-height: 48px; }
.article .close { margin-bottom: 16px; }
.article .loose { margin-bottom: 22px; }
.article .section-end { margin-bottom: 112px; }
.article .two-lines { min-height: 96px; }
.article .tucked { text-indent: -8px; }
.smile { display: inline-block; width: 40px; height: 40px; vertical-align: -7px; margin-right: 6px; }
.complete { display: flex; align-items: center; gap: 15px; margin: 41px 0 0 330px; color: #0e1118; font-size: 32px; font-weight: 600; }
.next {
  align-self: flex-end;
  height: 80px;
  padding: 0 51px 0 31px;
  display: flex;
  align-items: center;
  border-radius: 12px;
  background: #75797c;
  color: #0e1118;
  font-weight: 600;
}
.next span { margin-right: 18px; color: #55585f; font-weight: 500; }
.next svg { margin-left: 24px; }

/* desktop and dock */
.desktop {
  position: relative;
  z-index: 2;
  flex: none;
  display: flex;
  justify-content: center;
  padding-bottom: 10px;
  background: linear-gradient(#300a0d, #8a1a26 53px, #852a50 53px, #a52c57 90px, #b53262);
}
.desktop::before, .desktop::after {
  content: "";
  position: absolute;
  top: 0;
  width: 88px;
  height: 53px;
  background: linear-gradient(#8d5c6b, #d98fae);
}
.desktop::before { left: 0; clip-path: polygon(0 0, 44px 0, 84px 53px, 0 53px); }
.desktop::after { right: 0; clip-path: polygon(44px 0, 88px 0, 88px 53px, 0 53px); }
.dock {
  position: relative;
  z-index: 1;
  margin-top: 1px;
  height: 132px;
  display: flex;
  align-items: center;
  gap: 28px;
  padding: 0 20px 10px 18px;
  border: 2px solid #a14763;
  border-radius: 40px;
  background: linear-gradient(#7a2035, #912347 60%, #952549);
  box-shadow: 0 0 0 1px #4d1527, 0 0 100px rgba(0, 0, 0, .3);
}
.app { position: relative; width: 82px; height: 82px; }
.app > svg { width: 82px; height: 82px; filter: drop-shadow(0 2px 3px rgba(0, 0, 0, .3)); }
.running::after {
  content: "";
  position: absolute;
  left: 37px;
  bottom: -26px;
  width: 8px;
  height: 8px;
  border-radius: 50%;
  background: #ffa3c6;
}
.badge {
  position: absolute;
  top: -12px;
  right: -14px;
  width: 40px;
  height: 40px;
  border-radius: 50%;
  background: #e65242;
  color: #fff;
  font-size: 24px;
  font-weight: 400;
  line-height: 40px;
  text-align: center;
  box-shadow: 0 1px 3px rgba(0, 0, 0, .4);
}
.tv { font: 500 34px Inter, sans-serif; fill: #f5f6f6; }
.divider { width: 2px; height: 96px; margin: 0 10px; background: #cb6285; }
.end { margin: 0 8px; }
```
